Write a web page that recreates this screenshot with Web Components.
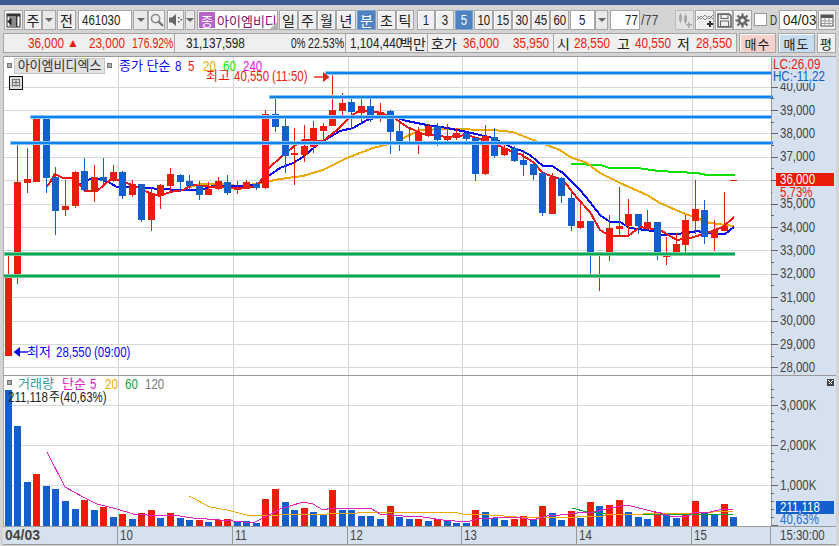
<!DOCTYPE html>
<html>
<head>
<meta charset="utf-8">
<style>
  html, body { margin: 0; padding: 0; width: 839px; height: 546px; overflow: hidden; background: #d4d4d4; }
  body { font: 14px "Liberation Sans", "Noto Sans CJK KR", sans-serif; color: #222; }
</style>
</head>
<body>
<title-strip></title-strip>
<tool-bar></tool-bar>
<quote-bar></quote-bar>
<chart-frame></chart-frame>

<script>
const KR = '"Liberation Sans", "Noto Sans CJK KR", sans-serif';
const RED = '#ea1c0a', BLUE = '#1360cc';
// the reference font is tall and narrow, nothing installed is, so squeeze latin text
const NARROW = `.n { display: inline-block; white-space: nowrap; transform: scaleX(.82); transform-origin: 0 50%; }
        .m { display: inline-block; white-space: nowrap; transform: scaleX(.82); transform-origin: 50% 50%; }`;
const nt = (s, sx) => `<span class="n"${sx ? ` style="transform:scaleX(${sx})"` : ''}>${s}</span>`;
const mt = s => `<span class="m">${s}</span>`;
const svgT = (x, y, fill, s, sx = .82, fs = 14) =>
  `<text transform="translate(${x} ${y}) scale(${sx} 1)" fill="${fill}" style="font-size:${fs}px">${s}</text>`;

class TitleStrip extends HTMLElement {
  constructor() {
    super();
    this.attachShadow({ mode: 'open' }).innerHTML = `
      <style>:host { display: block; height: 5px; background: #3b5a93; }</style>`;
  }
}
customElements.define('title-strip', TitleStrip);

class UiBtn extends HTMLElement {
  constructor() {
    super();
    this.attachShadow({ mode: 'open' }).innerHTML = `
      <style>
        :host {
          display: flex; align-items: center; justify-content: center;
          box-sizing: border-box; height: 20px; flex: none;
          background: #efefef; border: 1px solid #a6a6a6; box-shadow: inset 1px 1px 0 #fafafa;
          font: 14px ${KR}; color: #222; overflow: hidden;
        }
        :host([active]) { background: #4f82c0; color: #fff; border-color: #7aa2d2; box-shadow: none; }
        :host([field]) { background: #fff; justify-content: flex-start; padding-left: 3px; box-shadow: none; }
        :host([off]) { background: #e2e2e2; border-color: #bcbcbc; box-shadow: none; }
      </style>
      <slot></slot>`;
  }
}
customElements.define('ui-btn', UiBtn);

class DropBtn extends HTMLElement {
  constructor() {
    super();
    this.attachShadow({ mode: 'open' }).innerHTML = `
      <style>
        :host {
          display: flex; align-items: center; justify-content: center;
          box-sizing: border-box; height: 20px; flex: none;
          background: #e9e9e9; border: 1px solid #a6a6a6;
        }
        i { width: 0; height: 0; border: 4px solid transparent; border-top: 4px solid #666; border-bottom: 0; }
      </style>
      <i></i>`;
  }
}
customElements.define('drop-btn', DropBtn);

class NameBox extends HTMLElement {
  constructor() {
    super();
    this.attachShadow({ mode: 'open' }).innerHTML = `
      <style>
        :host {
          display: flex; align-items: center; position: relative; flex: none;
          box-sizing: border-box; height: 20px; width: 81px; margin-left: 2px;
          background: #fff; border: 1px solid #a6a6a6; overflow: hidden;
          font: 13px ${KR}; color: #7c1070;
        }
        b { font-weight: normal; display: flex; align-items: center; justify-content: center;
            width: 16px; height: 16px; margin: 0 2px 0 1px; background: #b565c8; color: #fff; flex: none; }
        span { white-space: nowrap; }
        i { position: absolute; right: 0; bottom: 0; width: 0; height: 0;
            border-left: 7px solid transparent; border-bottom: 7px solid #b4b4b4; }
      </style>
      <b>종</b><span><slot></slot></span><i></i>`;
  }
}
customElements.define('name-box', NameBox);

class ToolBar extends HTMLElement {
  constructor() {
    super();
    const b = (t, w, m, attr = '') => `<ui-btn ${attr} style="width:${w}px;margin-left:${m}px">${t}</ui-btn>`;
    const d = (w, m) => `<drop-btn style="width:${w}px;margin-left:${m}px"></drop-btn>`;
    this.attachShadow({ mode: 'open' }).innerHTML = `
      <style>
        :host { display: flex; height: 20px; margin-top: 5px; padding-left: 4px; width: 835px; box-sizing: border-box; }
        .t { display: flex; align-items: center; flex: none; }
        svg { display: block; }
        ${NARROW}
      </style>
      ${b(`<svg width="15" height="15" viewBox="0 0 15 15"><rect x="1" y="1" width="13" height="13" fill="#fff" stroke="#333"/><rect x="1" y="1" width="13" height="2.5" fill="#333"/><rect x="10" y="3" width="1.4" height="11" fill="#333"/><rect x="3" y="3" width="7" height="11" fill="#8a8a8a"/><path d="M1 8.5 5.5 5V12Z" fill="#222"/></svg>`, 19, 0)}
      ${b('주', 18, 1)}${d(14, 0)}
      ${b('전', 19, 1)}
      ${b(nt('461030'), 54, 2, 'field')}${d(15, 1)}
      ${b(`<svg width="14" height="14" viewBox="0 0 14 14"><circle cx="5.6" cy="5.6" r="4.1" fill="none" stroke="#8c8c8c" stroke-width="1.6"/><path d="M8.6 8.6 13 13" stroke="#777" stroke-width="2.4"/></svg>`, 17, 0)}
      ${b(`<svg width="15" height="14" viewBox="0 0 15 14"><path d="M1 4.5H4L8 1V13L4 9.5H1Z" fill="#666"/><rect x="10" y="4" width="1.6" height="1.6" fill="#666"/><rect x="10" y="8" width="1.6" height="1.6" fill="#666"/><rect x="12.5" y="6" width="1.6" height="1.6" fill="#666"/></svg>`, 17, 2)}${d(10, 1)}
      <name-box>아이엠비디</name-box>
      ${b('일', 19, 1)}${b('주', 19, 0)}${b('월', 19, 0)}${b('년', 20, 0)}
      ${b('분', 19, 1, 'active')}${b('초', 19, 1)}${b('틱', 18, 0)}
      ${b(mt('1'), 18, 3)}${b(mt('3'), 19, 0)}${b(mt('5'), 18, 1, 'active')}
      ${b(mt('10'), 19, 1)}${b(mt('15'), 19, 0)}${b(mt('30'), 19, 0)}${b(mt('45'), 19, 0)}${b(mt('60'), 19, 0)}
      <ui-btn field style="width:25px;margin-left:1px;padding-left:8px">${nt('5')}</ui-btn>${d(13, 0)}
      <ui-btn field style="width:30px;margin-left:2px;padding-left:14px">${nt('77')}</ui-btn>
      <span class="t" style="width:19px;color:#444;padding-left:1px;box-sizing:border-box">${nt('/77', .9)}</span>
      ${b(`<svg width="15" height="15" viewBox="0 0 15 15" fill="#aaa"><rect x="2" y="2" width="3" height="6"/><rect x="3" y="0" width="1" height="10"/><rect x="7" y="3" width="3" height="6"/><rect x="8" y="1" width="1" height="10"/><path d="M11 9h1.6v2H15v1.6h-2.4V15H11v-2.4H9V11h2Z"/></svg>`, 19, 16, 'off')}
      ${b(`<svg width="16" height="15" viewBox="0 0 16 15"><path d="M0 3 4 6 8 2 12 6 16 2M0 7 4 3 8 7 12 3 16 6" fill="none" stroke="#888"/><path d="M10 10h2V8h2v2h2v2h-2v2h-2v-2h-2Z" fill="#333"/></svg>`, 19, 1)}
      ${b(`<svg width="15" height="15" viewBox="0 0 15 15"><path d="M1 1H12L14 3V14H1Z" fill="none" stroke="#666" stroke-width="1.6"/><rect x="4" y="1.5" width="7" height="4" fill="none" stroke="#666"/><rect x="3.5" y="8" width="8" height="5.5" fill="none" stroke="#666"/></svg>`, 18, 1)}
      ${b(`<svg width="15" height="15" viewBox="0 0 15 15"><circle cx="7.5" cy="7.5" r="3.4" fill="none" stroke="#666" stroke-width="2.6"/><path d="M7.5 .5V3M7.5 12V14.5M.5 7.5H3M12 7.5H14.5M2.5 2.5 4.3 4.3M10.7 10.7 12.5 12.5M12.5 2.5 10.7 4.3M4.3 10.7 2.5 12.5" stroke="#666" stroke-width="2.2"/></svg>`, 19, 0)}
      <span class="t" style="width:13px;height:13px;margin:3px 0 0 2px;background:#fff;border:1px solid #999;box-sizing:border-box"></span>
      <span class="t" style="width:12px;padding-left:3px;box-sizing:border-box;color:#333">${nt('D', .7)}</span>
      ${b(nt('04/03', .95), 38, 0, 'field')}
      ${b(`<svg width="14" height="14" viewBox="0 0 14 14"><rect x="1" y="2" width="12" height="11" fill="#fff" stroke="#555"/><rect x="1" y="2" width="12" height="3" fill="#555"/><path d="M1 8H13M1 10.5H13M5 5V13M9 5V13" stroke="#999"/></svg>`, 18, 1)}`;
  }
}
customElements.define('tool-bar', ToolBar);

class QuoteCell extends HTMLElement {
  constructor() {
    super();
    this.attachShadow({ mode: 'open' }).innerHTML = `
      <style>
        :host { display: flex; align-items: center; box-sizing: border-box; height: 100%; flex: none;
                border-right: 1px solid #a6a6a6; white-space: nowrap; }
      </style>
      <slot></slot>`;
  }
}
customElements.define('quote-cell', QuoteCell);

class QuoteBar extends HTMLElement {
  constructor() {
    super();
    // latin cell: fixed width + left margin, squeezed to the reference width
    const s = (t, w, m, c = 'r', sx = .84) =>
      `<span class="${c}" style="width:${w}px;margin-left:${m}px">${nt(t, sx)}</span>`;
    const h = (t, w, m) => `<span class="k" style="width:${w}px;margin-left:${m}px">${t}</span>`;
    this.attachShadow({ mode: 'open' }).innerHTML = `
      <style>
        :host { display: flex; height: 20px; margin: 3px 0 0 3px; width: 833px; font: 14px ${KR}; color: #222; }
        .box { display: flex; box-sizing: border-box; width: 734px; height: 20px; background: #efefef;
               border: 1px solid #a6a6a6; border-right: 0; }
        .box > quote-cell > span { display: block; flex: none; }
        .r { color: #ea1c0a; }
        .k { color: #222; }
        ui-btn { font-size: 13px; letter-spacing: 1px; }
        ${NARROW}
      </style>
      <div class="box">
        <quote-cell style="width:171px">${s('36,000', 36, 24)}<span class="r" style="width:11px;margin-left:3px;font-size:12px">▲</span>${s('23,000', 36, 11)}${s('176.92%', 41, 7, 'r', .75)}</quote-cell>
        <quote-cell style="width:171px">${s('31,137,598', 60, 11, 'k')}${s('0%', 14, 45, 'k', .72)}${s('22.53%', 37, 3, 'k', .76)}</quote-cell>
        <quote-cell style="width:82px;overflow:hidden">${s('1,104,440', 50, 4, 'k')}${h('백만', 26, 0)}</quote-cell>
        <quote-cell style="width:126px">${h('호가', 26, 3)}${s('36,000', 36, 6)}${s('35,950', 36, 14)}</quote-cell>
        <quote-cell style="width:183px">${h('시', 13, 3)}${s('28,550', 36, 4)}${h('고', 13, 7)}${s('40,550', 36, 5)}${h('저', 13, 6)}${s('28,550', 36, 6)}</quote-cell>
      </div>
      <ui-btn style="width:37px;margin-left:2px;background:#f6d1cc">매수</ui-btn>
      <ui-btn style="width:37px;margin-left:2px;background:#c6dcf1">매도</ui-btn>
      <ui-btn style="width:19px;margin-left:2px">평</ui-btn>`;
  }
}
customElements.define('quote-bar', QuoteBar);

// vertical grid is shared by both panes
const GRID_X = [118, 233, 348, 462, 577, 692];

const poly = (pts, color, w) =>
  `<polyline points="${pts.map(p => p.join(',')).join(' ')}" fill="none" stroke="${color}" stroke-width="${w}"/>`;
const cx = i => Math.floor(8.2 + i * 9.545);

// r/b, high, body top, body bottom, low (in page y)
const CANDLES = [
  ['r',254,277,356,356],['r',145,182,277,284],['r',148,179,183,193],['r',117,118,182,182],['b',117,119,178,193],
  ['b',167,177,211,235],['r',180,206,210,216],['r',171,172,206,208],['b',158,171,190,191],['r',165,177,192,202],
  ['b',158,177,181,184],['r',165,172,181,182],['b',171,172,196,199],['r',180,184,195,197],['b',184,184,220,222],
  ['r',187,193,220,231],['r',184,185,196,209],['r',168,174,186,191],['b',174,175,182,192],['b',175,181,186,190],
  ['b',181,186,195,200],['r',182,189,195,195],['r',177,181,189,190],['b',175,182,193,195],['r',181,188,190,194],
  ['r',180,182,189,189],['b',182,184,188,190],['r',110,114,188,189],['b',97,114,127,132],['b',119,126,156,173],
  ['r',128,153,155,185],['r',125,146,155,162],['r',121,128,147,153],['r',123,126,131,141],['r',74,110,126,126],
  ['r',93,103,111,115],['b',98,102,112,128],['r',98,106,113,123],['b',98,106,117,122],['r',103,112,115,122],
  ['b',110,111,132,154],['b',120,131,142,151],['b',127,141,142,143],['r',127,132,142,154],['r',124,126,136,137],
  ['b',123,126,140,146],['r',124,137,140,142],['r',128,133,138,140],['b',132,133,139,142],['b',137,138,174,181],
  ['r',125,136,174,175],['b',128,137,156,158],['r',141,148,155,156],['b',146,148,161,162],['b',150,160,165,176],
  ['b',162,164,175,180],['b',172,173,213,216],['r',173,177,214,214],['b',177,178,196,203],['b',193,198,226,231],
  ['r',203,221,228,229],['b',221,221,253,275],['r',253,255,256,291],['r',215,228,253,261],['r',187,226,229,237],
  ['r',199,214,226,235],['b',214,214,226,234],['r',210,222,228,230],['b',222,222,255,260],['r',237,256,257,265],
  ['r',233,244,252,256],['r',215,220,245,253],['r',180,209,221,234],['b',200,210,237,244],['r',220,230,238,251],
  ['r',192,226,231,231],['r',180,180,181,181]
];

const MA8 = [[78,185],[90,179],[100,179],[110,183],[117,187],[133,187],[147,188],[160,189],[180,190],[200,190],[213,186],[240,186],[257,185],[267,177],[280,168],[293,163],[303,157],[317,145],[330,137],[340,131],[353,128],[367,120],[387,115],[407,121],[427,125],[447,128],[467,132],[493,138],[513,148],[520,150],[530,155],[543,166],[552,166],[563,173],[580,190],[590,202],[600,215],[610,222],[620,222],[630,228],[653,231],[662,235],[687,233],[697,231],[707,233],[725,234],[734,227]];
const MA5 = [[47,187],[55,174],[63,178],[72,178],[78,183],[85,191],[97,191],[110,180],[117,180],[127,183],[137,187],[147,192],[160,196],[170,192],[183,190],[192,185],[213,187],[240,188],[257,186],[270,167],[280,158],[293,147],[303,140],[323,141],[337,130],[350,117],[360,110],[377,112],[393,117],[407,127],[423,134],[447,137],[467,135],[493,143],[513,152],[520,154],[533,162],[543,173],[563,180],[577,198],[590,212],[600,230],[610,236],[628,236],[640,227],[660,230],[677,240],[690,238],[707,233],[723,227],[734,217]];
const MA20 = [[190,187],[200,184],[227,184],[240,187],[260,183],[280,179],[303,176],[323,170],[347,158],[373,148],[393,143],[420,130],[447,129],[493,130],[513,132],[533,140],[560,150],[570,157],[587,163],[600,173],[620,183],[647,195],[660,203],[683,213],[710,223],[734,226]];
const MA60 = [[571,164],[600,165],[610,168],[638,168],[658,171],[677,172],[697,173],[707,175],[735,175]];

const heavy = (x1, x2, y, core, edge) =>
  `<rect x="${x1}" y="${y - 1}" width="${x2 - x1}" height="4" fill="${edge}"/><rect x="${x1 + 1}" y="${y}" width="${x2 - x1 - 1}" height="2" fill="${core}"/>`;

class PricePane extends HTMLElement {
  constructor() {
    super();
    const ys = []; // 40000 .. 28000
    for (let k = 0; k <= 12; k++) ys.push(Math.round(86.6 + k * 23.4));
    const grid = ys.map(y => `<rect x="4" y="${y}" width="767" height="1" fill="#d8d8d8"/>`).join('')
      + GRID_X.map(x => `<rect x="${x}" y="57" width="1" height="318" fill="#d2d2d2"/>`).join('');
    const candles = CANDLES.map((c, i) => {
      const x = cx(i), col = c[0] === 'r' ? RED : BLUE;
      return `<rect x="${x}" y="${c[1]}" width="1" height="${c[4] - c[1]}" fill="${col}"/>`
        + `<rect x="${x - 3}" y="${c[2]}" width="7" height="${Math.max(1, c[3] - c[2])}" fill="${col}"/>`;
    }).join('');
    const labels = [];
    for (let k = 0; k <= 12; k++) {
      const y = 86.6 + k * 23.4, v = 40000 - k * 1000;
      labels.push(`<rect x="771" y="${Math.round(y)}" width="7" height="1" fill="#666"/>`);
      if (k < 12) labels.push(`<rect x="771" y="${Math.round(y + 11.7)}" width="3" height="1" fill="#666"/>`);
      labels.push(svgT(780, y + 4.5, '#444', v.toLocaleString('en-US')));
    }
    this.attachShadow({ mode: 'open' }).innerHTML = `
      <style>
        :host { display: block; position: relative; height: 318px; font: 14px ${KR}; }
        svg.main { display: block; width: 833px; height: 318px; }
        .lab { position: absolute; white-space: nowrap; line-height: 14px; }
        .sq { position: absolute; width: 3px; height: 3px; background: #aaa; border: 1px solid #777; }
        .title { position: absolute; left: 11px; top: 1px; width: 89px; height: 14px; background: #e2e2e2;
                 border: 1px solid #c4c4c4; font-size: 13px; line-height: 14px; text-align: center; color: #333; }
        .tbl { position: absolute; left: 6px; top: 19px; }
        text { font-family: ${KR}; }
        ${NARROW}
      </style>
      <svg class="main" viewBox="3 57 833 318" shape-rendering="crispEdges">
        <rect x="3" y="57" width="768" height="318" fill="#fff"/>
        <rect x="771" y="57" width="65" height="318" fill="#d6e1ef"/>
        ${grid}
        ${poly(MA60, '#10e000', 2)}${poly(MA20, '#eda800', 2)}${poly(MA8, '#0808f0', 2)}${poly(MA5, '#ee1414', 2)}
        ${candles}
        ${heavy(325, 772, 72, '#0a82f0', '#8cc4f6')}
        ${heavy(269, 773, 96, '#0a82f0', '#8cc4f6')}
        ${heavy(30, 771, 116, '#0a82f0', '#8cc4f6')}
        ${heavy(10, 773, 142, '#0a82f0', '#8cc4f6')}
        ${heavy(4, 735, 253, '#04a850', '#70cc9c')}
        ${heavy(3, 720, 275, '#04a850', '#70cc9c')}
        <rect x="3" y="57" width="1" height="318" fill="#aaa"/>
        <rect x="771" y="57" width="1" height="318" fill="#999"/>
        ${labels.join('')}
        <rect x="772" y="58" width="64" height="25" fill="#d6e1ef"/>
        ${svgT(773, 69, '#ea1c0a', 'LC:26,09', .78, 15)}
        ${svgT(773, 81, '#1360cc', 'HC:-11,22', .8, 14.5)}
        <rect x="776" y="173" width="58" height="13" fill="#ea1c0a"/>
        ${svgT(780, 184, '#fff', '36,000')}
        <rect x="772" y="186" width="64" height="12" fill="#d6e1ef"/>
        ${svgT(780, 197, '#ea1c0a', '5,73%')}
      </svg>
      <span class="sq" style="left:4px;top:6px"></span>
      <span class="title">아이엠비디엑스</span>
      <span class="sq" style="left:104px;top:6px"></span>
      <span class="lab" style="left:116px;top:2px;color:#0808f0;font-size:13px">종가 단순</span>
      <span class="lab" style="left:172px;top:2px;color:#0808f0">${nt('8')}</span>
      <span class="lab" style="left:185px;top:2px;color:#ea1c0a">${nt('5')}</span>
      <span class="lab" style="left:200px;top:2px;color:#eda800">${nt('20')}</span>
      <span class="lab" style="left:220px;top:2px;color:#10e000">${nt('60')}</span>
      <span class="lab" style="left:240px;top:2px;color:#e010e0">${nt('240')}</span>
      <svg class="tbl" width="14" height="14" viewBox="0 0 14 14"><rect x=".5" y=".5" width="13" height="13" fill="#ddd" stroke="#111"/><path d="M3 3.5H11M3 6.5H11M3 9.5H11M3.5 3V11M7 3V11M10.5 3V11" stroke="#777"/></svg>
      <span class="lab" style="left:203px;top:12px;color:#ea1c0a;font-size:13px">최고</span>
      <span class="lab" style="left:231px;top:12px;color:#ea1c0a">${nt('40,550')}</span>
      <span class="lab" style="left:269px;top:12px;color:#ea1c0a">${nt('(11:50)')}</span>
      <svg style="position:absolute;left:311px;top:14px" width="16" height="12" viewBox="0 0 16 12"><path d="M0 6H10" stroke="#ea1c0a" stroke-width="1.4"/><path d="M9 1 15.5 6 9 11Z" fill="#ea1c0a"/></svg>
      <svg style="position:absolute;left:10px;top:289px" width="15" height="12" viewBox="0 0 15 12"><path d="M5 6H15" stroke="#0808f0" stroke-width="1.4"/><path d="M7 1 .5 6 7 11Z" fill="#0808f0"/></svg>
      <span class="lab" style="left:24px;top:288px;color:#0808f0;font-size:13px">최저</span>
      <span class="lab" style="left:53px;top:288px;color:#0808f0">${nt('28,550')}</span>
      <span class="lab" style="left:91px;top:288px;color:#0808f0">${nt('(09:00)')}</span>`;
  }
}
customElements.define('price-pane', PricePane);

const VOL = [
  ['b',389],['b',425],['b',481],['r',473],['b',485],['b',488],['b',500],['b',508],['r',499],['b',509],
  ['r',506],['b',516],['r',513],['b',518],['r',512],['r',509],['b',517],['r',512],['b',517],['b',519],
  ['r',519],['b',521],['r',519],['r',518],['b',520],['b',520],['b',522],['r',498],['r',488],['b',501],
  ['b',509],['r',507],['b',511],['b',514],['r',489],['b',509],['b',509],['b',515],['b',515],['b',518],
  ['r',505],['b',516],['b',518],['r',518],['b',520],['r',518],['b',520],['b',522],['b',522],['r',509],
  ['b',511],['b',517],['b',519],['r',518],['r',515],['b',519],['r',505],['b',512],['b',519],['r',510],
  ['b',517],['r',501],['b',505],['r',504],['r',499],['b',511],['b',516],['b',518],['r',511],['b',514],
  ['b',517],['r',514],['r',500],['b',512],['b',514],['r',503],['b',516]
];
const VMA5 = [[47,451],[65,486],[83,496],[97,503],[117,508],[133,513],[147,514],[173,514],[193,517],[207,518],[233,520],[253,522],[267,515],[280,508],[290,505],[303,501],[313,503],[323,509],[332,507],[357,507],[372,508],[380,513],[403,515],[423,516],[443,519],[467,521],[477,518],[493,517],[517,516],[533,519],[547,515],[560,514],[577,512],[593,511],[610,507],[627,504],[647,509],[660,512],[673,516],[688,515],[693,512],[710,511],[723,508],[733,508]];
const VMA20 = [[189,495],[210,506],[227,509],[247,514],[263,515],[280,514],[300,513],[327,513],[357,512],[393,511],[453,511],[463,513],[490,514],[517,516],[547,517],[577,516],[603,515],[608,513],[643,513],[693,512],[733,510]];
const VMA60 = [[572,507],[587,511],[607,513],[643,513],[693,513],[733,513]];

class VolumePane extends HTMLElement {
  constructor() {
    super();
    let ticks = '';
    [404, 444, 484].forEach((y, i) => {
      ticks += `<rect x="771" y="${y}" width="7" height="1" fill="#666"/>`
        + svgT(780, y + 4.5, '#444', `${3 - i},000K`);
    });
    for (let y = 388; y < 525; y += 8)
      if (![404, 444, 484].includes(y)) ticks += `<rect x="771" y="${y}" width="3" height="1" fill="#666"/>`;
    const bars = VOL.map((v, i) =>
      `<rect x="${cx(i) - 3}" y="${v[1]}" width="7" height="${525 - v[1]}" fill="${v[0] === 'r' ? RED : BLUE}"/>`).join('');
    this.attachShadow({ mode: 'open' }).innerHTML = `
      <style>
        :host { display: block; position: relative; height: 151px; font: 14px ${KR}; border-top: 1px solid #999; box-sizing: border-box; }
        svg.main { display: block; width: 833px; height: 150px; }
        .lab { position: absolute; white-space: nowrap; line-height: 14px; top: 1px; }
        text { font-family: ${KR}; }
        ${NARROW}
      </style>
      <svg class="main" viewBox="3 375 833 150" shape-rendering="crispEdges">
        <rect x="3" y="375" width="768" height="150" fill="#fff"/>
        <rect x="771" y="375" width="65" height="150" fill="#d6e1ef"/>
        ${[404, 444, 484].map(y => `<rect x="4" y="${y}" width="767" height="1" fill="#d8d8d8"/>`).join('')}
        ${GRID_X.map(x => `<rect x="${x}" y="375" width="1" height="150" fill="#d2d2d2"/>`).join('')}
        ${bars}
        ${poly(VMA60, '#10a040', 1)}${poly(VMA20, '#eda800', 1)}${poly(VMA5, '#e020c0', 1)}
        <rect x="3" y="375" width="1" height="150" fill="#aaa"/>
        <rect x="771" y="375" width="1" height="150" fill="#999"/>
        <rect x="771" y="524" width="7" height="1" fill="#666"/>
        ${ticks}
        <rect x="776" y="500" width="58" height="13" fill="#1360cc"/>
        ${svgT(780, 511, '#fff', '211,118')}
        ${svgT(780, 523, '#1f70d8', '40,63%')}
        <rect x="827" y="378" width="7" height="7" fill="#444"/>
        <path d="M828.5 379.5 832.5 383.5M832.5 379.5 828.5 383.5" stroke="#fff" stroke-width="1"/>
      </svg>
      <span style="position:absolute;left:4px;top:4px;width:3px;height:3px;background:#aaa;border:1px solid #777"></span>
      <span class="lab" style="left:15px;color:#309a94;font-size:13px">거래량</span>
      <span class="lab" style="left:59px;color:#e020c0;font-size:13px">단순</span>
      <span class="lab" style="left:87px;color:#e020c0">${nt('5')}</span>
      <span class="lab" style="left:102px;color:#eda800">${nt('20')}</span>
      <span class="lab" style="left:122px;color:#10a040">${nt('60')}</span>
      <span class="lab" style="left:142px;color:#777">${nt('120')}</span>
      <span class="lab" style="left:5px;top:14px;color:#222">${nt('211,118')}</span>
      <span class="lab" style="left:46px;top:14px;color:#222;font-size:12px">주</span>
      <span class="lab" style="left:57px;top:14px;color:#222">${nt('(40,63%)')}</span>`;
  }
}
customElements.define('volume-pane', VolumePane);

class DateStrip extends HTMLElement {
  constructor() {
    super();
    const days = ['10', '11', '12', '13', '14', '15'];
    const widths = [115, 115, 114, 115, 115, 79];
    this.attachShadow({ mode: 'open' }).innerHTML = `
      <style>
        :host { display: flex; height: 19px; background: #d6e1ef; border-top: 1px solid #999; border-bottom: 1px solid #999;
                box-sizing: border-box; font: 14px ${KR}; color: #444; }
        div { box-sizing: border-box; height: 100%; border-right: 1px solid #999; padding-left: 2px; line-height: 17px; flex: none; white-space: nowrap; }
        ${NARROW}
      </style>
      <div style="width:115px"><b>04/03</b></div>
      ${days.map((d, i) => `<div style="width:${widths[i]}px">${nt(d)}</div>`).join('')}
      <div style="border:0;padding-left:9px;width:64px">${nt('15:30:00')}</div>`;
  }
}
customElements.define('date-strip', DateStrip);

class ChartFrame extends HTMLElement {
  constructor() {
    super();
    this.attachShadow({ mode: 'open' }).innerHTML = `
      <style>
        :host { display: block; box-sizing: border-box; width: 833px; height: 488px; margin: 3px 0 0 3px; border-top: 1px solid #999; }
      </style>
      <price-pane></price-pane>
      <volume-pane></volume-pane>
      <date-strip></date-strip>`;
  }
}
customElements.define('chart-frame', ChartFrame);
</script>
</body>
</html>
